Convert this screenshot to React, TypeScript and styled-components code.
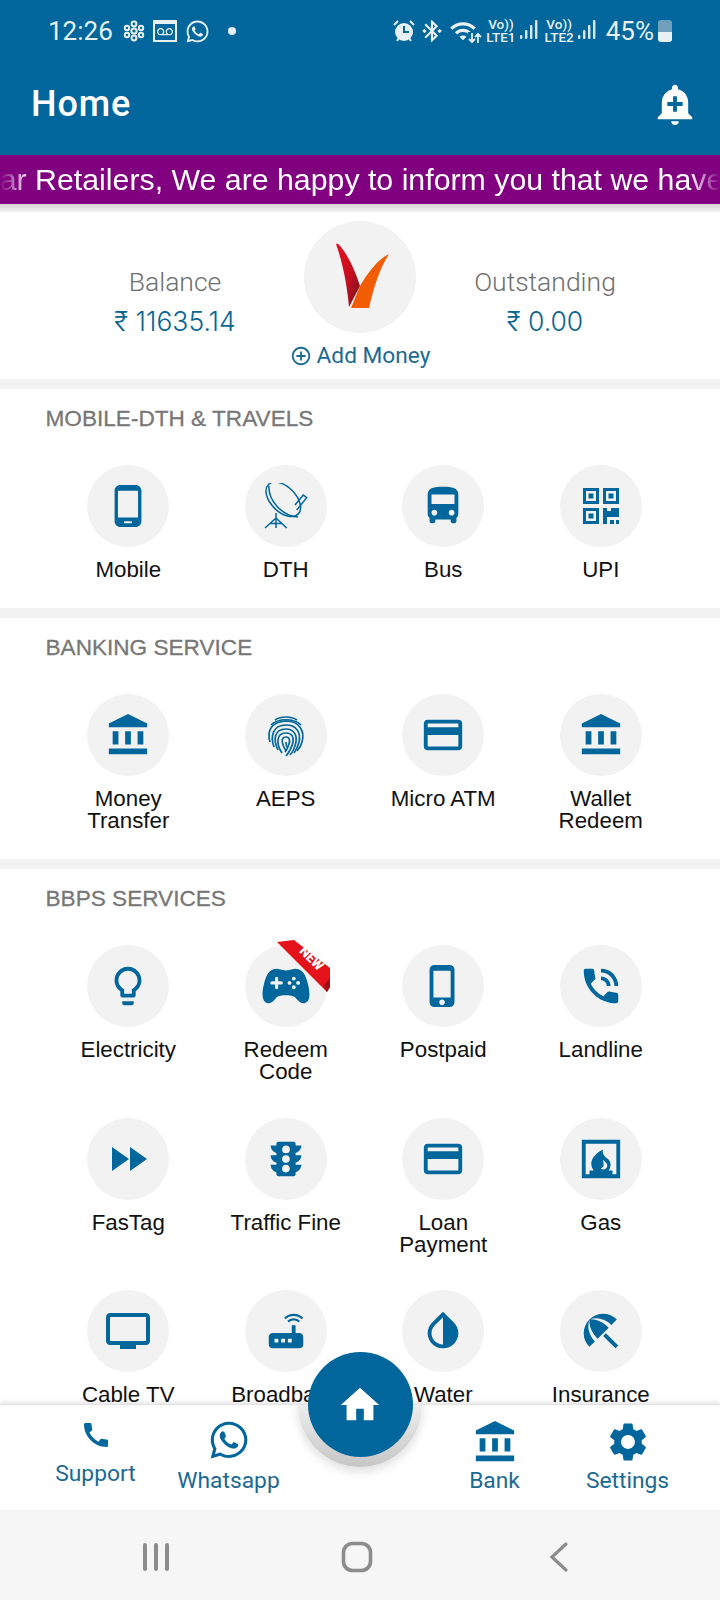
import { ReactNode } from "react";
import styled, { createGlobalStyle } from "styled-components";
import { FaWhatsapp } from "react-icons/fa";
import { IoGameController } from "react-icons/io5";
import {
  MdAccountBalance,
  MdAddAlert,
  MdAddCircleOutline,
  MdBeachAccess,
  MdBluetoothConnected,
  MdCall,
  MdCreditCard,
  MdDirectionsBus,
  MdFastForward,
  MdFireplace,
  MdHome,
  MdInvertColors,
  MdLightbulbOutline,
  MdPhoneAndroid,
  MdPhoneInTalk,
  MdPhoneIphone,
  MdRouter,
  MdSettings,
  MdTraffic,
  MdTv,
  MdVoicemail,
  MdWifi,
} from "react-icons/md";

const BLUE = "#00669b";

const GlobalStyle = createGlobalStyle`
  html, body {
    margin: 0;
    padding: 0;
    background: #fff;
  }
  * {
    box-sizing: border-box;
  }
`;

const DishIcon = () => (
  <svg width="44" height="47" viewBox="-1 0 44 47" fill="none" stroke={BLUE} strokeWidth="1.5">
    <ellipse cx="18.3" cy="16.3" rx="21" ry="12.5" transform="rotate(45 18.3 16.3)" />
    <path d="M4 3c-1 13 12 30 29 31" />
    <path d="M30 22l8.3-10 3.4 2.7L31.7 27" />
    <path d="M11 30v15M10.5 35.5L0 45M11.5 35.5L21.7 45M5 40.5h11.7" />
  </svg>
);

const FingerprintIcon = () => (
  <svg width="46" height="46" viewBox="0 0 46 46" fill="none" stroke={BLUE} strokeWidth="1.7">
    <path d="M12 8c6-4 16-4 22 0" />
    <path d="M8 13c7-7 23-7 30 0" />
    <path d="M7 30C4 20 7 10 23 9c14 0 19 11 16 21-1 4-3 7-5 9" />
    <path d="M11 35C7 24 10 13 23 13c11 0 15 8 13 17-1 4-2 7-5 11" />
    <path d="M15 38c-5-10-4-21 8-21 8 0 11 6 10 13-1 4-2 9-6 13" />
    <path d="M19 41c-6-9-6-20 4-20 6 0 8 4 7 9-1 5-3 9-7 14" />
    <path d="M23 39c-4-6-6-14 0-14 4 0 4 4 3 7-1 3-2 6-4 8" />
    <path d="M23 30c0 3 1 5 1 5" />
  </svg>
);

const QrIcon = () => (
  <svg width="36" height="37" viewBox="0 0 36 37" fill={BLUE}>
    <path fillRule="evenodd" d="M0 0h16v16H0zM3 3v10h10V3z" />
    <rect x="5.5" y="5.5" width="5" height="5" />
    <path fillRule="evenodd" d="M20 0h16v16H20zM23 3v10h10V3z" />
    <rect x="25.5" y="5.5" width="5" height="5" />
    <path fillRule="evenodd" d="M0 20h16v16H0zM3 23v10h10V23z" />
    <rect x="5.5" y="25.5" width="5" height="5" />
    <path d="M20 20h4v3h4v-3h8v9H24v7h-4z" />
    <rect x="27" y="32" width="4" height="4" />
    <rect x="33" y="32" width="3" height="4" />
  </svg>
);

const NewRibbon = () => (
  <Ribbon viewBox="0 0 54 54" width="54" height="54">
    <polygon points="0,2 17,0 53,28 53,47 50,52" fill="#e3121b" />
    <polygon points="46,46 53,38 53,47 50,52" fill="#a30d14" />
    <text
      x="34.7"
      y="18.3"
      fill="#fff"
      fontFamily="Roboto, sans-serif"
      fontSize="13"
      fontWeight="900"
      textAnchor="middle"
      dominantBaseline="central"
      transform="rotate(45 34.7 18.3)"
    >
      NEW
    </text>
  </Ribbon>
);

const AppLogo = () => (
  <svg width="64" height="72" viewBox="0 0 64 72">
    <defs>
      <linearGradient id="logoRed" x1="0" y1="0" x2="1" y2="1">
        <stop offset="0" stopColor="#e8101c" />
        <stop offset="0.55" stopColor="#c40f20" />
        <stop offset="1" stopColor="#6e1222" />
      </linearGradient>
    </defs>
    <path d="M5 3c1-1 3 0 5 3 8 10 15 26 19 39L18 66C16 42 11 20 5 3z" fill="url(#logoRed)" />
    <path d="M58 13C46 19 36 33 29 45L20 67h18c5-22 11-40 20-54z" fill="#f25c05" />
  </svg>
);

type Service = {
  label: ReactNode;
  icon: ReactNode;
  badge?: boolean;
};

type Section = {
  title: string;
  services: Service[];
};

const sections: Section[] = [
  {
    title: "MOBILE-DTH & TRAVELS",
    services: [
      { label: "Mobile", icon: <MdPhoneAndroid size={46} /> },
      { label: "DTH", icon: <DishIcon /> },
      { label: "Bus", icon: <MdDirectionsBus size={46} /> },
      { label: "UPI", icon: <QrIcon /> },
    ],
  },
  {
    title: "BANKING SERVICE",
    services: [
      { label: <>Money<br />Transfer</>, icon: <MdAccountBalance size={46} /> },
      { label: "AEPS", icon: <FingerprintIcon /> },
      { label: "Micro ATM", icon: <MdCreditCard size={46} /> },
      { label: <>Wallet<br />Redeem</>, icon: <MdAccountBalance size={46} /> },
    ],
  },
  {
    title: "BBPS SERVICES",
    services: [
      { label: "Electricity", icon: <MdLightbulbOutline size={46} /> },
      { label: <>Redeem<br />Code</>, icon: <IoGameController size={50} />, badge: true },
      { label: "Postpaid", icon: <MdPhoneIphone size={46} /> },
      { label: "Landline", icon: <MdPhoneInTalk size={46} /> },
      { label: "FasTag", icon: <MdFastForward size={48} /> },
      { label: "Traffic Fine", icon: <MdTraffic size={46} /> },
      { label: <>Loan<br />Payment</>, icon: <MdCreditCard size={46} /> },
      { label: "Gas", icon: <MdFireplace size={46} /> },
      { label: "Cable TV", icon: <MdTv size={48} /> },
      { label: "Broadband", icon: <MdRouter size={46} /> },
      { label: "Water", icon: <MdInvertColors size={46} /> },
      { label: "Insurance", icon: <MdBeachAccess size={46} /> },
    ],
  },
];

const SignalBars = () => (
  <svg width="18" height="22" viewBox="0 0 18 22" fill="#d8e8f0">
    <rect x="0" y="15" width="2.4" height="4" rx="1" />
    <rect x="5" y="10" width="2.4" height="9" rx="1" />
    <rect x="10" y="5" width="2.4" height="14" rx="1" />
    <rect x="15" y="0" width="2.4" height="19" rx="1" />
  </svg>
);

const App = () => (
  <>
    <GlobalStyle />
    <Screen>
      <Header>
        <StatusBar>
          <StatusGroup>
            <Clock>12:26</Clock>
            <svg width="22" height="22" viewBox="0 0 22 22" fill="none" stroke="#e6f0f5" strokeWidth="2">
              <circle cx="11" cy="11" r="2.6" />
              <circle cx="11" cy="4" r="2.4" />
              <circle cx="11" cy="18" r="2.4" />
              <circle cx="4" cy="8" r="2.2" />
              <circle cx="18" cy="8" r="2.2" />
              <circle cx="4" cy="15" r="2.2" />
              <circle cx="18" cy="15" r="2.2" />
            </svg>
            <VoicemailBox>
              <MdVoicemail size={16} />
            </VoicemailBox>
            <FaWhatsapp size={25} />
            <StatusDot />
          </StatusGroup>
          <StatusGroupRight>
            <svg width="22" height="24" viewBox="0 0 22 24">
              <circle cx="11" cy="13" r="9" fill="#e6f0f5" />
              <path d="M11 7v6h5" stroke={BLUE} strokeWidth="2" fill="none" />
              <path d="M1 6l4-4M21 6l-4-4M4 22l2-3M18 22l-2-3" stroke="#e6f0f5" strokeWidth="2" />
            </svg>
            <MdBluetoothConnected size={26} />
            <WifiGroup>
              <MdWifi size={28} />
              <WifiArrows width="14" height="12" viewBox="0 0 14 12" fill="none" stroke="#e6f0f5" strokeWidth="1.8">
                <path d="M4 1v9M1 7l3 3 3-3M10 11V2M7 5l3-3 3 3" />
              </WifiArrows>
            </WifiGroup>
            <NetworkTag>
              <span>Vo))</span>
              <span>LTE1</span>
            </NetworkTag>
            <SignalBars />
            <NetworkTag>
              <span>Vo))</span>
              <span>LTE2</span>
            </NetworkTag>
            <SignalBars />
            <BatteryText>45%</BatteryText>
            <BatteryIcon />
          </StatusGroupRight>
        </StatusBar>
        <Toolbar>
          <PageTitle>Home</PageTitle>
          <MdAddAlert size={46} color="#fff" />
        </Toolbar>
      </Header>

      <Marquee>
        <MarqueeText>Dear Retailers, We are happy to inform you that we have</MarqueeText>
      </Marquee>

      <Content>
        <TopShade />
        <BalanceCard>
          <Stat>
            <StatLabel>Balance</StatLabel>
            <StatValue>₹ 11635.14</StatValue>
          </Stat>
          <LogoColumn>
            <LogoCircle>
              <AppLogo />
            </LogoCircle>
            <AddMoney>
              <MdAddCircleOutline size={22} />
              Add Money
            </AddMoney>
          </LogoColumn>
          <Stat>
            <StatLabel>Outstanding</StatLabel>
            <StatValue>₹ 0.00</StatValue>
          </Stat>
        </BalanceCard>

        {sections.map((section) => (
          <ServiceSection key={section.title}>
            <SectionTitle>{section.title}</SectionTitle>
            <ServiceGrid>
              {section.services.map((service, index) => (
                <ServiceItem key={index}>
                  <IconCircle>
                    {service.icon}
                    {service.badge && <NewRibbon />}
                  </IconCircle>
                  <ServiceLabel>{service.label}</ServiceLabel>
                </ServiceItem>
              ))}
            </ServiceGrid>
          </ServiceSection>
        ))}
      </Content>

      <BottomBar>
        <CradleClip>
          <Cradle />
        </CradleClip>
        <HomeButton>
          <MdHome size={46} />
        </HomeButton>
        <NavItem $raised>
          <MdCall size={32} />
          <NavLabel>Support</NavLabel>
        </NavItem>
        <NavItem>
          <FaWhatsapp size={42} />
          <NavLabel>Whatsapp</NavLabel>
        </NavItem>
        <span />
        <NavItem>
          <MdAccountBalance size={46} />
          <NavLabel>Bank</NavLabel>
        </NavItem>
        <NavItem>
          <MdSettings size={46} />
          <NavLabel>Settings</NavLabel>
        </NavItem>
      </BottomBar>

      <SystemNav>
        <svg width="30" height="32" viewBox="0 0 30 32" fill="#8c8c8c">
          <rect x="2" y="2" width="4" height="28" rx="2" />
          <rect x="13" y="2" width="4" height="28" rx="2" />
          <rect x="24" y="2" width="4" height="28" rx="2" />
        </svg>
        <svg width="32" height="32" viewBox="0 0 32 32" fill="none" stroke="#8c8c8c" strokeWidth="3.6">
          <rect x="2.5" y="2.5" width="27" height="27" rx="9" />
        </svg>
        <svg width="20" height="32" viewBox="0 0 20 32" fill="none" stroke="#8c8c8c" strokeWidth="3.2" strokeLinecap="round">
          <path d="M17 3L3 16l14 13" />
        </svg>
      </SystemNav>
    </Screen>
  </>
);

export default App;

const Screen = styled.div`
  width: 720px;
  height: 1600px;
  display: flex;
  flex-direction: column;
  overflow: hidden;
  background: #fff;
  font-family: Roboto, "Liberation Sans", sans-serif;
`;

const Header = styled.header`
  height: 155px;
  flex-shrink: 0;
  background: ${BLUE};
  color: #fff;
`;

const StatusBar = styled.div`
  height: 62px;
  display: flex;
  align-items: center;
  justify-content: space-between;
  padding: 0 48px 0 48px;
  color: #e6f0f5;
`;

const StatusGroup = styled.div`
  display: flex;
  align-items: center;
  gap: 8px;
`;

const StatusGroupRight = styled(StatusGroup)`
  gap: 4px;
`;

const Clock = styled.span`
  font-size: 26px;
  margin-right: 2px;
`;

const VoicemailBox = styled.span`
  width: 24px;
  height: 22px;
  display: flex;
  align-items: center;
  justify-content: center;
  border: 2px solid #e6f0f5;
  border-top-width: 4px;
`;

const StatusDot = styled.span`
  width: 8px;
  height: 8px;
  margin-left: 10px;
  border-radius: 50%;
  background: #e6f0f5;
`;

const WifiGroup = styled.span`
  position: relative;
  display: flex;
  width: 30px;
`;

const WifiArrows = styled.svg`
  position: absolute;
  right: -3px;
  bottom: 1px;
  background: ${BLUE};
`;

const NetworkTag = styled.span`
  display: flex;
  flex-direction: column;
  align-items: center;
  margin-left: 3px;
  font-size: 13.5px;
  font-weight: 500;
  line-height: 13px;
`;

const BatteryText = styled.span`
  font-size: 26px;
  margin-left: 6px;
`;

const BatteryIcon = styled.span`
  width: 14px;
  height: 22px;
  border-radius: 3px;
  background: linear-gradient(to bottom, #6f9fba 55%, #e6f0f5 55%);
`;

const Toolbar = styled.div`
  height: 84px;
  display: flex;
  align-items: center;
  justify-content: space-between;
  padding: 0 22px 0 31px;
`;

const PageTitle = styled.h1`
  margin: 0;
  font-size: 36px;
  font-weight: 500;
  letter-spacing: 0.9px;
`;

const Marquee = styled.div`
  height: 49px;
  flex-shrink: 0;
  display: flex;
  align-items: center;
  overflow: hidden;
  background: #800080;
`;

const MarqueeText = styled.div`
  width: 100%;
  overflow: hidden;
  white-space: nowrap;
  color: #fff;
  font-family: "Liberation Sans", sans-serif;
  font-size: 30.3px;
  text-indent: -39px;
  -webkit-mask-image: linear-gradient(to right, transparent 0, #000 30px, #000 690px, transparent 720px);
  mask-image: linear-gradient(to right, transparent 0, #000 30px, #000 690px, transparent 720px);
`;

const Content = styled.main`
  flex: 1;
  min-height: 0;
  overflow: hidden;
  background: #f2f2f2;
`;

const TopShade = styled.div`
  height: 8px;
  background: linear-gradient(to bottom, #d4d4d4, #f2f2f2);
`;

const BalanceCard = styled.section`
  height: 167px;
  display: grid;
  grid-template-columns: 230px 140px 230px;
  padding: 9px 60px 0;
  background: #fff;
`;

const Stat = styled.div`
  display: flex;
  flex-direction: column;
  align-items: center;
  padding-top: 46px;
`;

const StatLabel = styled.span`
  font-size: 26.5px;
  font-weight: 300;
  line-height: 30px;
  color: #6f6f6f;
`;

const StatValue = styled.span`
  margin-top: 9px;
  font-family: Inter, sans-serif;
  font-size: 26.5px;
  font-weight: 300;
  line-height: 30px;
  color: #0a6592;
`;

const LogoColumn = styled.div`
  display: flex;
  flex-direction: column;
  align-items: center;
`;

const LogoCircle = styled.div`
  width: 112px;
  height: 112px;
  display: flex;
  align-items: center;
  justify-content: center;
  padding-left: 5px;
  border-radius: 50%;
  background: #f2f2f2;
`;

const AddMoney = styled.div`
  margin-top: 10px;
  display: flex;
  align-items: center;
  gap: 5px;
  font-size: 22.7px;
  line-height: 26px;
  white-space: nowrap;
  color: #1a6a94;
`;

const ServiceSection = styled.section`
  margin-top: 10px;
  padding: 15px 0 27px 49.5px;
  background: #fff;
`;

const SectionTitle = styled.h2`
  margin: 0 0 0 -4px;
  font-family: "Liberation Sans", sans-serif;
  font-size: 22.6px;
  font-weight: 400;
  line-height: 30px;
  color: #777;
  -webkit-text-stroke: 0.3px #777;
`;

const ServiceGrid = styled.div`
  margin-top: 31px;
  display: grid;
  grid-template-columns: repeat(4, 157.5px);
  row-gap: 34.5px;
`;

const ServiceItem = styled.div`
  display: flex;
  flex-direction: column;
  align-items: center;
`;

const IconCircle = styled.div`
  position: relative;
  width: 82px;
  height: 82px;
  display: flex;
  align-items: center;
  justify-content: center;
  border-radius: 50%;
  background: #f2f2f2;
  color: ${BLUE};
`;

const Ribbon = styled.svg`
  position: absolute;
  top: -5px;
  left: 32px;
`;

const ServiceLabel = styled.div`
  margin-top: 12px;
  font-family: "Liberation Sans", sans-serif;
  font-size: 22.3px;
  line-height: 22px;
  text-align: center;
  color: #111;
`;

const BottomBar = styled.nav`
  position: relative;
  height: 106px;
  flex-shrink: 0;
  display: grid;
  grid-template-columns: repeat(5, 133px);
  padding: 14px 0 0 29px;
  background: #fff;
  border-top: 1px solid #e2e2e2;
  box-shadow: 0 -2px 4px rgba(0, 0, 0, 0.1);
`;

const CradleClip = styled.div`
  position: absolute;
  inset: 0;
  overflow: hidden;
`;

const Cradle = styled.div`
  position: absolute;
  top: -62px;
  left: 298px;
  width: 124px;
  height: 124px;
  border-radius: 50%;
  background: linear-gradient(to bottom, #ededed 50%, #c6c6c6 100%);
  box-shadow: 0 5px 10px rgba(0, 0, 0, 0.12);
`;

const HomeButton = styled.div`
  position: absolute;
  top: -53px;
  left: 307.5px;
  width: 105px;
  height: 105px;
  display: flex;
  align-items: center;
  justify-content: center;
  border-radius: 50%;
  background: ${BLUE};
  color: #fff;
`;

const NavItem = styled.div<{ $raised?: boolean }>`
  position: relative;
  height: ${(props) => (props.$raised ? "68px" : "75px")};
  display: flex;
  flex-direction: column;
  align-items: center;
  justify-content: space-between;
  color: ${BLUE};
`;

const NavLabel = styled.span`
  font-size: 22.8px;
  line-height: 26px;
  color: #1a6a94;
`;

const SystemNav = styled.div`
  height: 90px;
  flex-shrink: 0;
  display: grid;
  grid-template-columns: repeat(3, 201.5px);
  justify-items: center;
  align-items: start;
  padding: 31px 0 0 55px;
  background: #f6f6f6;
`;
